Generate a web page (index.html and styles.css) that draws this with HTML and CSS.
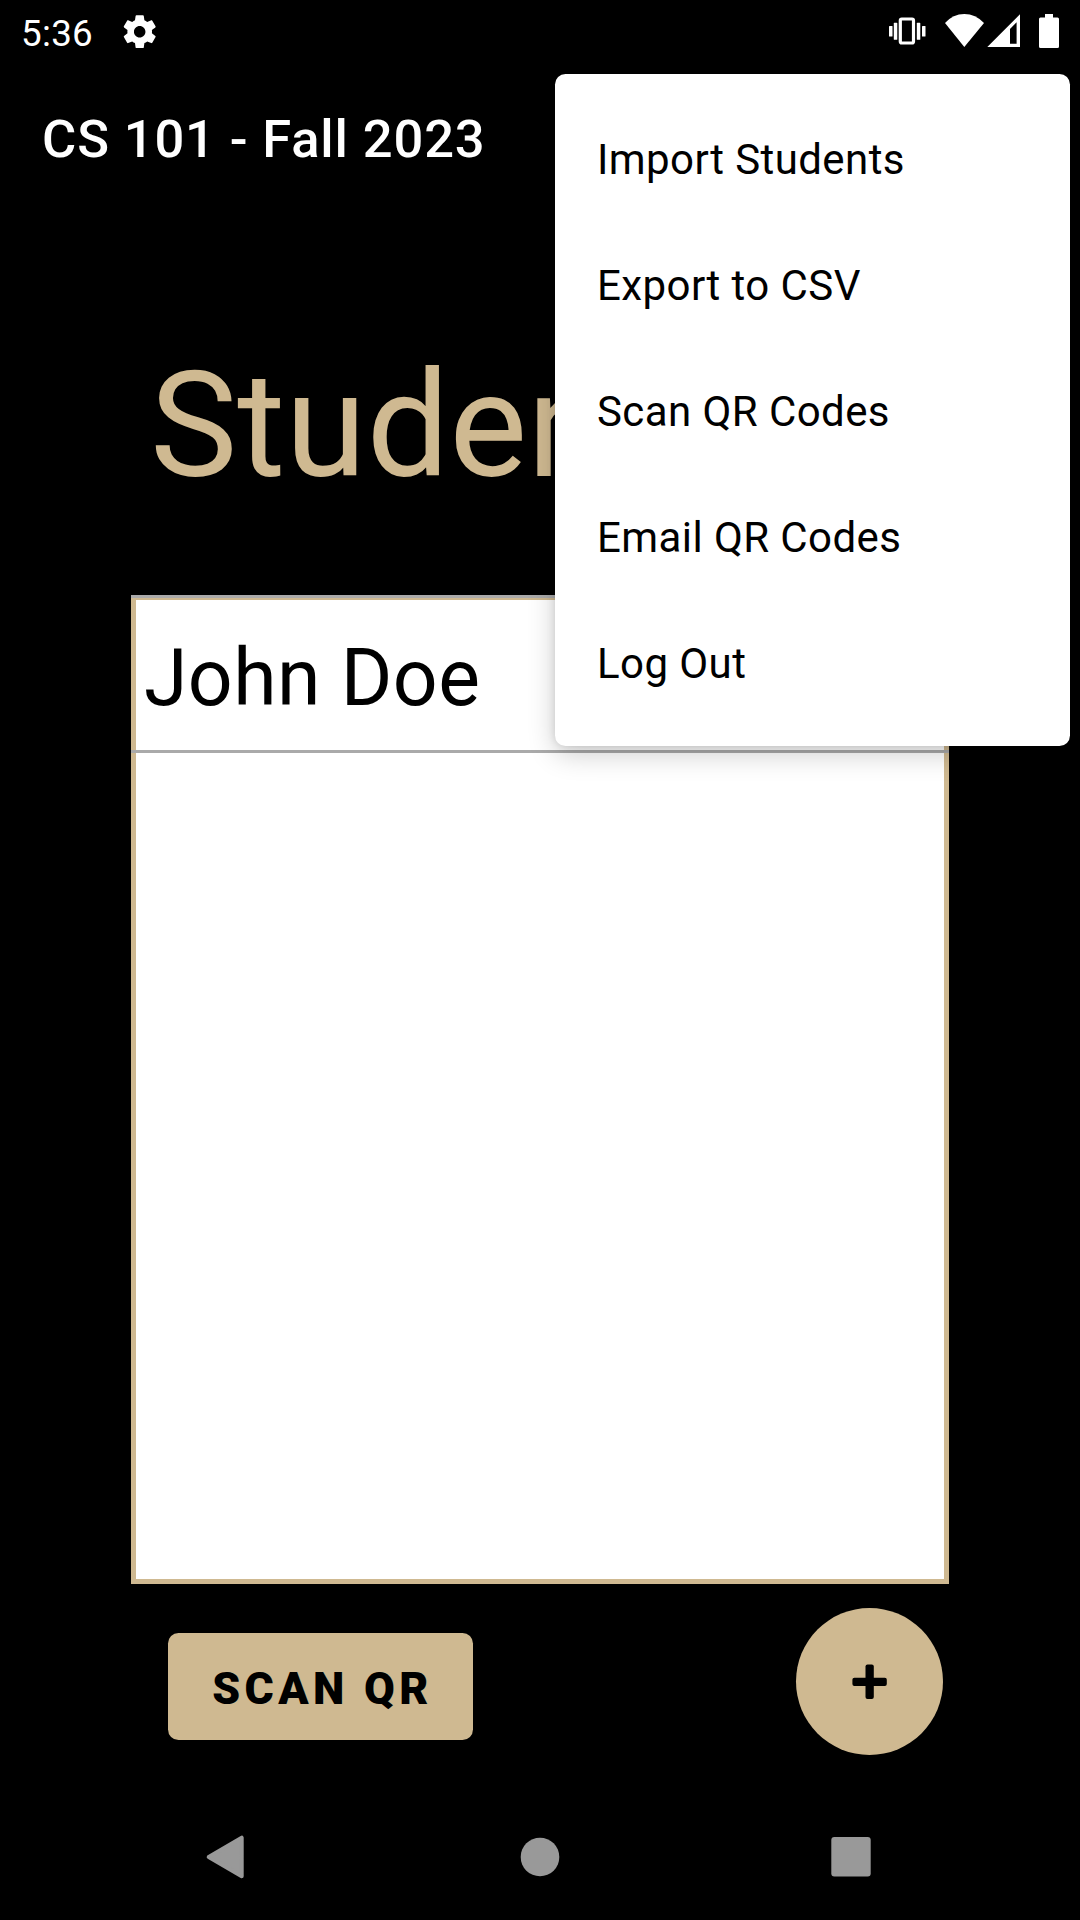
FILE: index.html
```html
<!DOCTYPE html>
<html lang="en">
<head>
<meta charset="utf-8">
<title>CS 101 - Fall 2023</title>
<link rel="stylesheet" href="styles.css">
</head>
<body>
<div class="screen">
  <header class="status-bar">
    <span class="clock">5:36</span>
    <svg class="gear" viewBox="0 0 24 24" width="39.4" height="39.4"><path fill="#fff" d="M19.43 12.98c.04-.32.07-.64.07-.98s-.03-.66-.07-.98l2.11-1.65c.19-.15.24-.42.12-.64l-2-3.46c-.12-.22-.39-.3-.61-.22l-2.49 1c-.52-.4-1.08-.73-1.69-.98l-.38-2.65C14.46 2.18 14.25 2 14 2h-4c-.25 0-.46.18-.49.42l-.38 2.65c-.61.25-1.17.59-1.69.98l-2.49-1c-.23-.09-.49 0-.61.22l-2 3.46c-.13.22-.07.49.12.64l2.11 1.65c-.04.32-.07.65-.07.98s.03.66.07.98l-2.11 1.65c-.19.15-.24.42-.12.64l2 3.46c.12.22.39.3.61.22l2.49-1c.52.4 1.08.73 1.69.98l.38 2.65c.03.24.24.42.49.42h4c.25 0 .46-.18.49-.42l.38-2.65c.61-.25 1.17-.59 1.69-.98l2.49 1c.23.09.49 0 .61-.22l2-3.46c.12-.22.07-.49-.12-.64l-2.11-1.65zM12 15.5c-1.93 0-3.5-1.57-3.5-3.5s1.57-3.5 3.5-3.5 3.5 1.57 3.5 3.5-1.57 3.5-3.5 3.5z"/></svg>
    <svg class="indicators" viewBox="880 0 200 63" width="200" height="63">
      <g fill="#fff">
        <rect x="889" y="26" width="3.5" height="10.5" rx=".6"/>
        <rect x="893.8" y="22.8" width="3.5" height="17" rx=".6"/>
        <rect x="916.8" y="22.8" width="3.5" height="17" rx=".6"/>
        <rect x="922" y="26" width="3.5" height="10.5" rx=".6"/>
        <path d="M964.3 47 945 23Q953 14 964.3 14T984 23Z"/>
        <path fill-rule="evenodd" d="M987.3 47 1020 14.3V47ZM1010 29V43.7h6.6V22.3Z"/>
        <path d="M1045 14h8v3.5h4.5q1.5 0 1.5 1.5v27.5q0 1.5-1.5 1.5h-17q-1.5 0-1.5-1.5v-27.5q0-1.5 1.5-1.5h4.5z"/>
      </g>
      <rect x="900.3" y="19" width="13.2" height="24" rx="1.5" fill="none" stroke="#fff" stroke-width="3.2"/>
    </svg>
  </header>

  <div class="app-bar">CS 101 - Fall 2023</div>

  <main class="content">
    <h1 class="heading">Student List</h1>
    <ul class="roster">
      <li class="student">John Doe</li>
    </ul>
    <div class="actions">
      <button class="scan">SCAN QR</button>
      <button class="add" aria-label="Add student">
        <svg viewBox="0 0 36 36" width="36" height="36"><rect x=".4" y="13.7" width="34.4" height="8.3" rx="2"/><rect x="13.5" y=".6" width="8.3" height="34.4" rx="2"/></svg>
      </button>
    </div>
  </main>

  <nav class="nav-bar">
    <svg viewBox="0 0 48 48" width="48" height="48"><path fill="#999" stroke="#999" stroke-width="4" stroke-linejoin="round" d="M3.7 24 36.7 4.7v38.6z"/></svg>
    <svg viewBox="0 0 48 48" width="48" height="48"><circle cx="24" cy="24" r="19.3" fill="#999"/></svg>
    <svg viewBox="0 0 48 48" width="48" height="48"><rect x="4.3" y="4" width="39.4" height="39.6" rx="3" fill="#999"/></svg>
  </nav>

  <ul class="menu">
    <li>Import Students</li>
    <li>Export to CSV</li>
    <li>Scan QR Codes</li>
    <li>Email QR Codes</li>
    <li>Log Out</li>
  </ul>
</div>
</body>
</html>
```
FILE: styles.css
```css
* { box-sizing: border-box; }

body {
  margin: 0;
  background: #000;
  font-family: Roboto, sans-serif;
}

ul { margin: 0; padding: 0; list-style: none; }
svg { display: block; flex: none; }

.screen {
  position: relative;
  width: 1080px;
  height: 1920px;
  overflow: hidden;
  display: flex;
  flex-direction: column;
}

.status-bar {
  display: flex;
  align-items: center;
  height: 63px;
  padding-left: 21px;
  color: #fff;
}
.clock {
  width: 99px;
  padding-top: 4px;
  font-size: 36.75px;
  line-height: 59px;
  letter-spacing: .3px;
}
.indicators { margin-left: auto; }

.app-bar {
  height: 147px;
  padding: 5px 42px 0;
  color: #fff;
  font-size: 52.5px;
  font-weight: 500;
  line-height: 142px;
  letter-spacing: .86px;
}

.content {
  display: flex;
  flex-direction: column;
  height: 1584px;
}
.heading {
  height: 385px;
  margin: 0;
  padding: 47px 0 0 150px;
  color: #cfb991;
  font-size: 147px;
  font-weight: 400;
  line-height: 338px;
  white-space: nowrap;
}
.roster {
  position: relative;
  width: 818px;
  height: 989px;
  margin-left: 131px;
  border: 5px solid #cfb991;
  background: #fff;
}
.roster::before {
  content: "";
  position: absolute;
  inset: -5px -5px auto;
  height: 3px;
  background: #aaa;
}
.student {
  height: 153px;
  margin: 0 -5px;
  padding: 6px 13px 0;
  border-bottom: 3px solid #aaa;
  font-size: 78.75px;
  line-height: 144px;
  letter-spacing: .4px;
}

.actions {
  display: flex;
  justify-content: space-between;
  align-items: flex-start;
  padding: 24px 137px 0 168px;
}
.actions button {
  border: 0;
  background: #cfb991;
  font-family: inherit;
  color: #000;
}
.scan {
  width: 305px;
  height: 107px;
  margin-top: 25px;
  padding: 4px 0 0 4px;
  border-radius: 10.5px;
  font-size: 44.6px;
  font-weight: 900;
  letter-spacing: 4.35px;
}
.add {
  display: grid;
  place-items: center;
  width: 147px;
  height: 147px;
  padding: 0;
  border-radius: 50%;
}

.nav-bar {
  display: flex;
  justify-content: space-between;
  align-items: center;
  height: 126px;
  padding: 0 205px;
}

.menu {
  position: absolute;
  top: 74px;
  left: 555px;
  width: 515px;
  padding: 21px 0;
  border-radius: 10.5px;
  background: #fff;
  box-shadow: 0 8px 28px rgba(0, 0, 0, .2), 0 0 8px rgba(0, 0, 0, .12);
}
.menu li {
  height: 126px;
  padding: 3px 42px 0;
  font-size: 42px;
  line-height: 123px;
  letter-spacing: .42px;
}
```
